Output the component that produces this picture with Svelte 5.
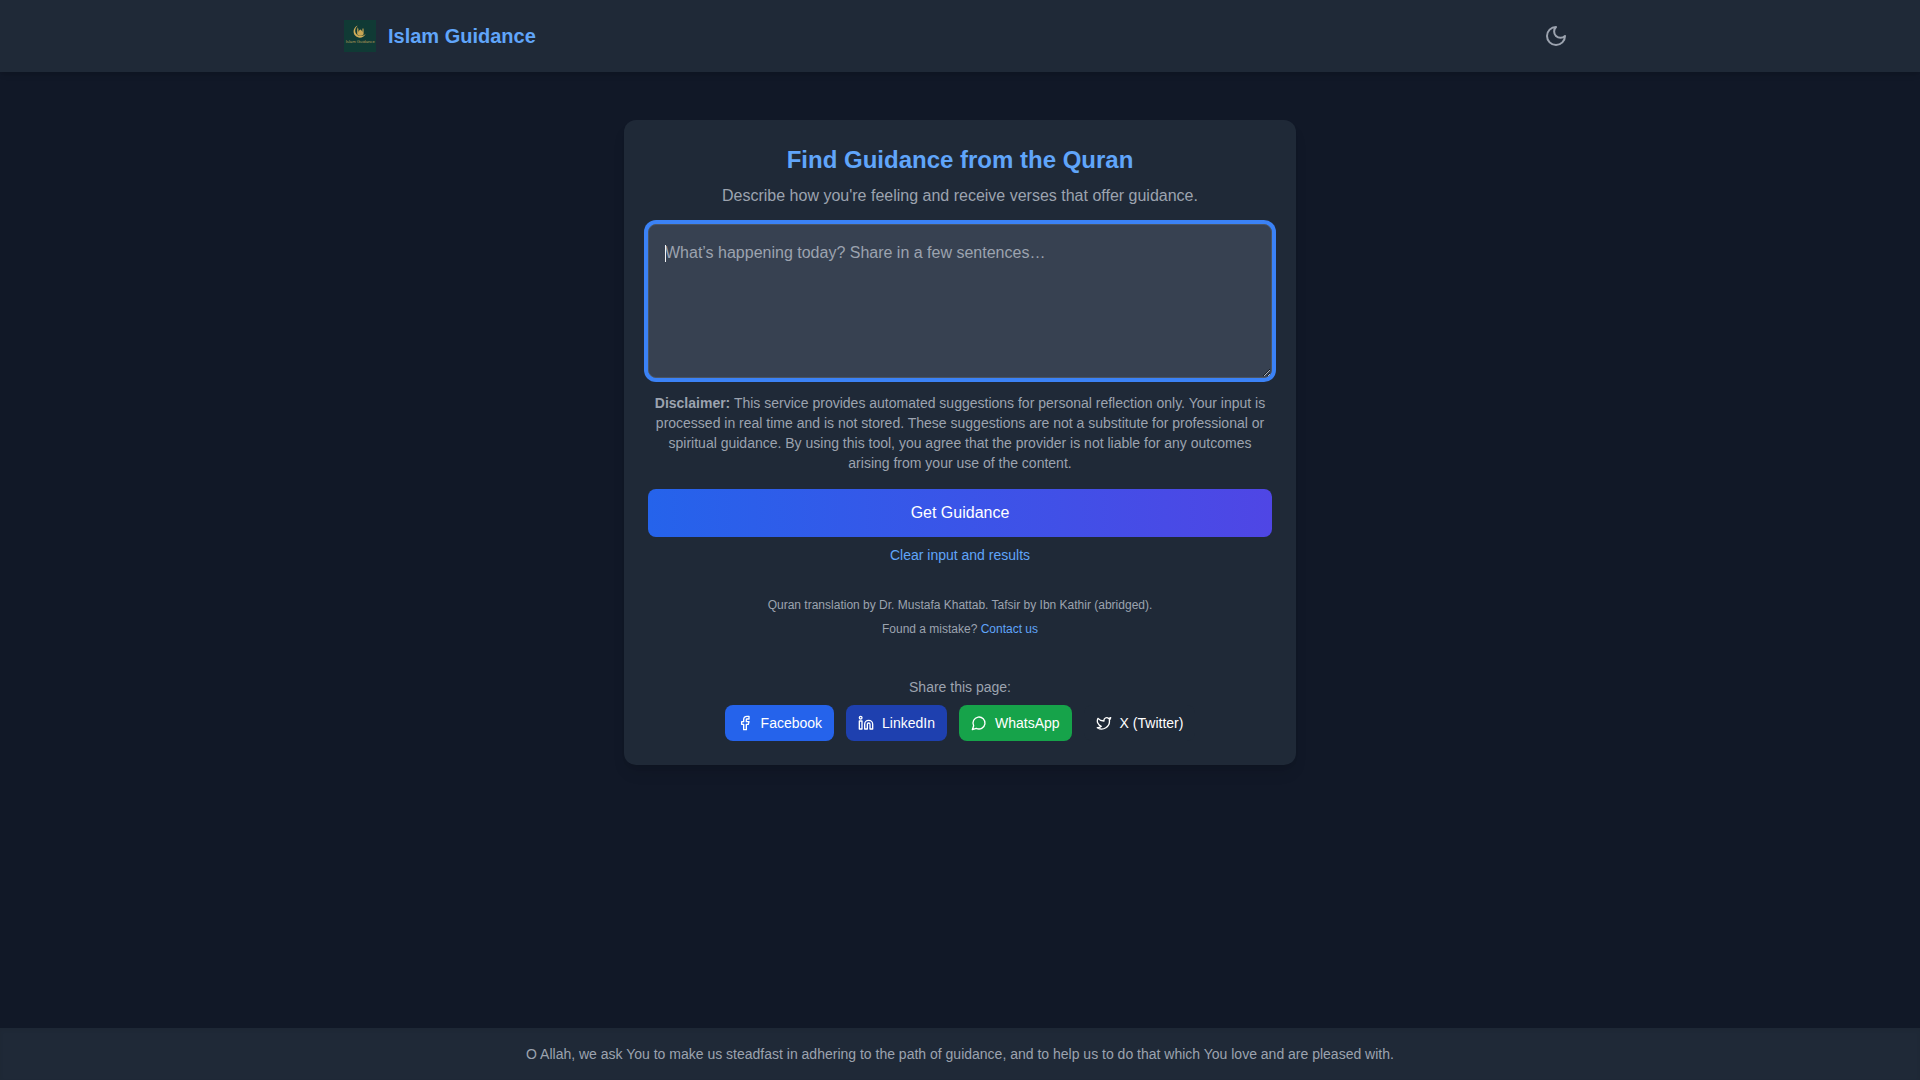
<script lang="ts">
	import { onMount } from 'svelte';

	let feeling = $state('');
	let focused = $state(false);
	let field: HTMLTextAreaElement;

	const shares = [
		{
			name: 'Facebook',
			style: 'facebook',
			paths: ['M18 2h-3a5 5 0 0 0-5 5v3H7v4h3v8h4v-8h3l1-4h-4V7a1 1 0 0 1 1-1h3z']
		},
		{
			name: 'LinkedIn',
			style: 'linkedin',
			paths: [
				'M16 8a6 6 0 0 1 6 6v7h-4v-7a2 2 0 0 0-2-2 2 2 0 0 0-2 2v7h-4v-7a6 6 0 0 1 6-6z',
				'M2 9h4v12H2z',
				'M6 4a2 2 0 1 1-4 0 2 2 0 0 1 4 0z'
			]
		},
		{
			name: 'WhatsApp',
			style: 'whatsapp',
			paths: ['M7.9 20A9 9 0 1 0 4 16.1L2 22Z']
		},
		{
			name: 'X (Twitter)',
			style: 'twitter',
			paths: [
				'M22 4s-.7 2.1-2 3.4c1.6 10-9.4 17.3-18 11.6 2.2.1 4.4-.6 6-2C3 15.5.5 9.6 3 5c2.2 2.6 5.6 4.1 9 4-.9-4.2 4-6.6 7-3.8 1.1 0 3-1.2 3-1.2z'
			]
		}
	];

	function clearAll() {
		feeling = '';
		field.focus();
	}

	onMount(() => field.focus());
</script>

<div class="page">
	<header>
		<div class="bar">
			<a class="brand" href="/">
				<svg class="logo" viewBox="0 0 320 320" aria-hidden="true">
					<rect width="320" height="320" fill="#103a35" />
					<path
						d="M136 54C94 72 84 124 112 156c30 32 82 28 106-18-28 28-66 30-90 6-24-26-20-60 8-90z"
						fill="#d0ac59"
					/>
					<path
						d="M132 142V92l6-20 6 20v32c2-12 10-20 20-28 10 8 18 14 20 26V94l6-16 6 16v48c-20 22-46 22-64 0z"
						fill="#c9a654"
					/>
					<text x="162" y="228" text-anchor="middle">Islam Guidance</text>
				</svg>
				<span>Islam Guidance</span>
			</a>
			<button type="button" class="theme" aria-label="Toggle theme">
				<svg class="icon" width="24" height="24" viewBox="0 0 24 24">
					<path d="M12 3a6 6 0 0 0 9 9 9 9 0 1 1-9-9Z" />
				</svg>
			</button>
		</div>
	</header>

	<main>
		<section class="card">
			<h1>Find Guidance from the Quran</h1>
			<label for="feeling">Describe how you're feeling and receive verses that offer guidance.</label>
			<div class="field">
				<textarea
					id="feeling"
					rows="5"
					class:empty={!feeling}
					placeholder="What’s happening today? Share in a few sentences…"
					bind:value={feeling}
					bind:this={field}
					onfocus={() => (focused = true)}
					onblur={() => (focused = false)}
				></textarea>
				{#if focused && !feeling}
					<span class="caret"></span>
				{/if}
			</div>
			<p class="disclaimer">
				<strong>Disclaimer:</strong> This service provides automated suggestions for personal reflection
				only. Your input is processed in real time and is not stored. These suggestions are not a
				substitute for professional or spiritual guidance. By using this tool, you agree that the
				provider is not liable for any outcomes arising from your use of the content.
			</p>
			<button type="button" class="submit">Get Guidance</button>
			<button type="button" class="clear" onclick={clearAll}>Clear input and results</button>

			<div class="credits">
				<p>Quran translation by Dr. Mustafa Khattab. Tafsir by Ibn Kathir (abridged).</p>
				<p>Found a mistake? <a href="#contact">Contact us</a></p>
			</div>

			<div class="share">
				<p>Share this page:</p>
				<div class="links">
					{#each shares as share}
						<a class={share.style} href="#share">
							<svg class="icon" width="16" height="16" viewBox="0 0 24 24" aria-hidden="true">
								{#each share.paths as d}
									<path {d} />
								{/each}
							</svg>
							{share.name}
						</a>
					{/each}
				</div>
			</div>
		</section>
	</main>

	<footer>
		O Allah, we ask You to make us steadfast in adhering to the path of guidance, and to help us to do
		that which You love and are pleased with.
	</footer>
</div>

<style>
	:global(body) {
		background: #111827;
	}
	.page {
		min-height: 100vh;
		display: flex;
		flex-direction: column;
		background: #111827;
		color: #9ca3af;
		font-family: 'Liberation Sans', Arial, sans-serif;
		font-size: 16px;
		line-height: 24px;
	}
	h1,
	p {
		margin: 0;
	}
	a {
		text-decoration: none;
	}
	button {
		border: none;
		background: none;
		font: inherit;
		cursor: pointer;
	}
	.icon {
		display: block;
		fill: none;
		stroke: currentColor;
		stroke-width: 2;
		stroke-linecap: round;
		stroke-linejoin: round;
	}
	header {
		background: #1f2937;
		box-shadow:
			0 4px 6px -1px rgb(0 0 0 / 0.1),
			0 2px 4px -2px rgb(0 0 0 / 0.1);
	}
	.bar {
		box-sizing: border-box;
		max-width: 1280px;
		margin: 0 auto;
		padding: 16px 24px;
		display: flex;
		align-items: center;
		justify-content: space-between;
	}
	.brand {
		display: flex;
		align-items: center;
		gap: 12px;
		color: #60a5fa;
		font-size: 20px;
		font-weight: 700;
		line-height: 28px;
	}
	.logo {
		width: 32px;
		height: 32px;
	}
	.logo text {
		fill: #b09a58;
		font-size: 42px;
		font-weight: 400;
	}
	.theme {
		padding: 8px;
		border-radius: 20px;
		color: #9ca3af;
	}
	main {
		flex: 1;
		display: flex;
		flex-direction: column;
		align-items: center;
		padding: 48px 24px;
	}
	.card {
		box-sizing: border-box;
		width: 100%;
		max-width: 672px;
		padding: 24px;
		display: flex;
		flex-direction: column;
		border-radius: 12px;
		background: #1f2937;
		text-align: center;
		box-shadow:
			0 10px 15px -3px rgb(0 0 0 / 0.1),
			0 4px 6px -4px rgb(0 0 0 / 0.1);
	}
	h1 {
		color: #60a5fa;
		font-size: 24px;
		line-height: 32px;
	}
	label {
		margin: 8px 0 16px;
	}
	.field {
		position: relative;
		display: grid;
	}
	textarea {
		box-sizing: border-box;
		width: 100%;
		padding: 16px;
		border: 1px solid #4b5563;
		border-radius: 8px;
		outline: none;
		background: #374151;
		color: #f3f4f6;
		font: inherit;
		resize: vertical;
	}
	textarea::placeholder {
		color: #9ca3af;
	}
	textarea:focus {
		box-shadow: 0 0 0 4px #3b82f6;
	}
	.empty {
		caret-color: transparent;
	}
	.caret {
		position: absolute;
		top: 21px;
		left: 17px;
		width: 1px;
		height: 17px;
		background: #f3f4f6;
		pointer-events: none;
	}
	.disclaimer {
		margin: 15px 0 16px;
		font-size: 14px;
		line-height: 20px;
	}
	.submit {
		padding: 12px 16px;
		border-radius: 8px;
		background: linear-gradient(to right, #2563eb, #4f46e5);
		color: #fff;
	}
	.clear {
		align-self: center;
		margin-top: 8px;
		padding: 0;
		color: #60a5fa;
		font-size: 14px;
		line-height: 20px;
	}
	.credits {
		margin-top: 32px;
		display: grid;
		gap: 8px;
		font-size: 12px;
		line-height: 16px;
	}
	.credits a {
		color: #60a5fa;
	}
	.share {
		margin-top: 40px;
		display: grid;
		gap: 8px;
		font-size: 14px;
		line-height: 20px;
	}
	.links {
		display: flex;
		flex-wrap: wrap;
		justify-content: center;
		gap: 12px;
	}
	.links a {
		display: flex;
		align-items: center;
		gap: 8px;
		padding: 8px 12px;
		border-radius: 8px;
		color: #fff;
	}
	.facebook {
		background: #2563eb;
	}
	.linkedin {
		background: #1e40af;
	}
	.whatsapp {
		background: #16a34a;
	}
	.twitter {
		background: #1f2937;
	}
	footer {
		padding: 16px;
		background: #1f2937;
		text-align: center;
		font-size: 14px;
		line-height: 20px;
		box-shadow: inset 0 2px 4px rgb(0 0 0 / 0.05);
	}
</style>
